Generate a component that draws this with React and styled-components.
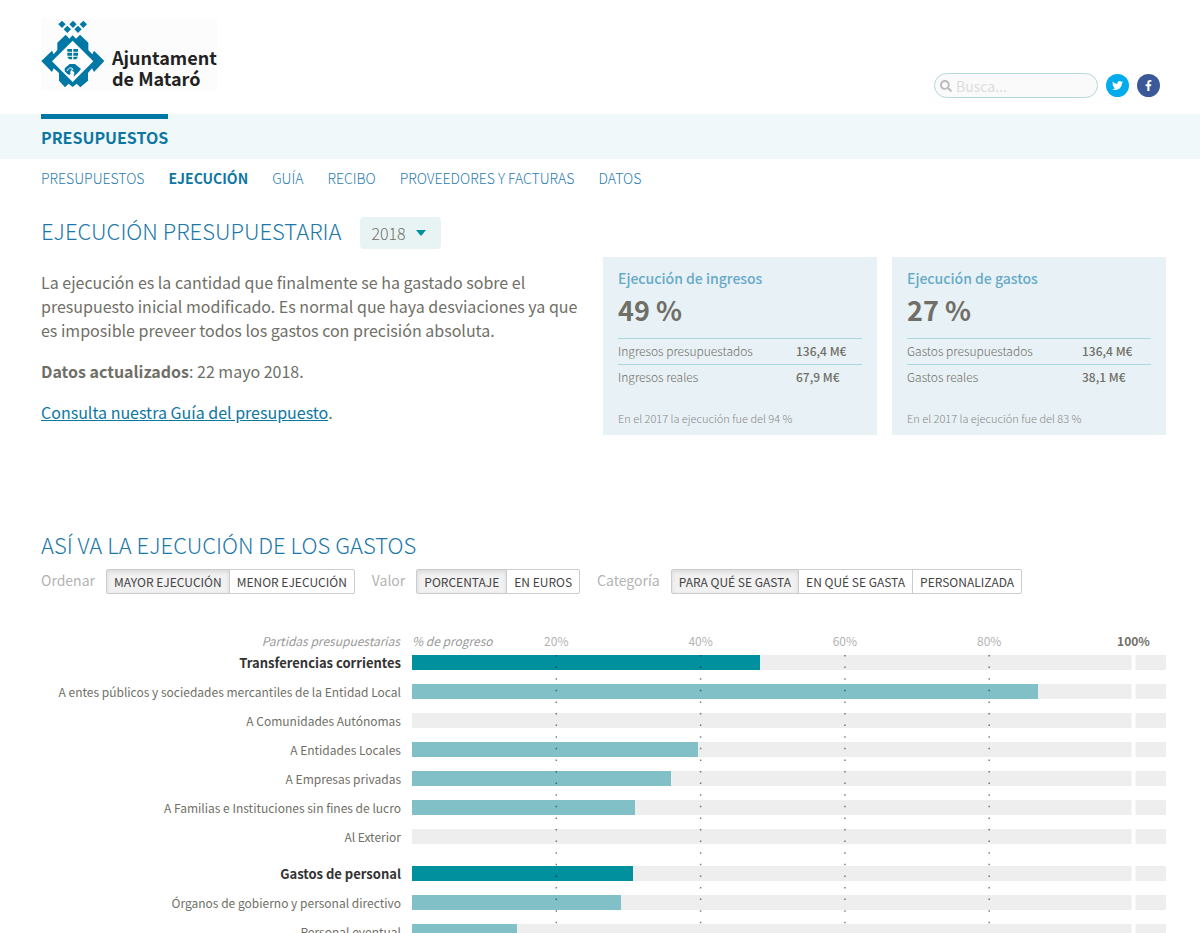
import React from "react";
import styled, { createGlobalStyle } from "styled-components";
import { FaFacebookF, FaSearch, FaTwitter } from "react-icons/fa";

const FULL_SCALE = 104.5;

const menu = [
  "Presupuestos",
  "Ejecución",
  "Guía",
  "Recibo",
  "Proveedores y facturas",
  "Datos",
];

const cards = [
  {
    title: "Ejecución de ingresos",
    percent: "49 %",
    rows: [
      ["Ingresos presupuestados", "136,4 M€"],
      ["Ingresos reales", "67,9 M€"],
    ],
    note: "En el 2017 la ejecución fue del 94 %",
    valueWidth: 66,
  },
  {
    title: "Ejecución de gastos",
    percent: "27 %",
    rows: [
      ["Gastos presupuestados", "136,4 M€"],
      ["Gastos reales", "38,1 M€"],
    ],
    note: "En el 2017 la ejecución fue del 83 %",
    valueWidth: 69,
  },
];

const filters = [
  { label: "Ordenar", options: ["Mayor ejecución", "Menor ejecución"] },
  { label: "Valor", options: ["Porcentaje", "En euros"] },
  {
    label: "Categoría",
    options: ["Para qué se gasta", "En qué se gasta", "Personalizada"],
  },
];

const groups = [
  [
    { name: "Transferencias corrientes", value: 48.3 },
    {
      name: "A entes públicos y sociedades mercantiles de la Entidad Local",
      value: 86.8,
    },
    { name: "A Comunidades Autónomas", value: 0 },
    { name: "A Entidades Locales", value: 39.6 },
    { name: "A Empresas privadas", value: 35.9 },
    { name: "A Familias e Instituciones sin fines de lucro", value: 30.9 },
    { name: "Al Exterior", value: 0 },
  ],
  [
    { name: "Gastos de personal", value: 30.6 },
    { name: "Órganos de gobierno y personal directivo", value: 29 },
    { name: "Personal eventual", value: 14.5 },
  ],
];

const toScale = (value) => `${(value / FULL_SCALE) * 100}%`;

const Emblem = () => (
  <svg width="64" height="70" viewBox="34 25 192 210" aria-hidden="true">
    <g fill="#0078a5">
      <path d="M97 30l11 11-11 11-11-11zM130 30l11 11-11 11-11-11zM161 30l11 11-11 11-11-11zM113 45l11 11-11 11-11-11zM145 45l11 11-11 11-11-11z" />
      <path d="M129 74l10 10 12-12 25 24v22l12 13 5-11 31 31-31 33-6-11-12 14v23l-23 20-11-11-12 10-12-10-11 11-18-20v-23l-16-14-5 11-32-33 32-31 5 11 11-13V96l25-24 11 12z" />
    </g>
    <path d="M129 90l62 62-62 62-62-62z" fill="#fff" />
    <g fill="#0078a5">
      <path d="M113 115h14v8h-14zM131 115h14v8h-14zM113 126h14v9h-14zM131 126h14v9h-14zM113 138h14v8h-9zM131 138h14l-5 8h-9z" />
      <path d="M105 173l15-13h16l18 15-7 9-15 14 2-13-8-6-5 13-7-1-9-9z" />
    </g>
    <path
      d="M112 181q7-14 17-7M124 187q-2-12 7-10"
      fill="none"
      stroke="#fff"
      strokeWidth="3"
    />
  </svg>
);

const GridLines = () => (
  <Overlay aria-hidden="true">
    {[20, 40, 60, 80].map((tick) => (
      <line
        key={tick}
        x1={toScale(tick)}
        x2={toScale(tick)}
        y1="0"
        y2="100%"
        stroke="#000"
        strokeOpacity="0.5"
        strokeWidth="1.5"
        strokeDasharray="1.5 10.1"
      />
    ))}
    <line
      x1={toScale(100)}
      x2={toScale(100)}
      y1="0"
      y2="100%"
      stroke="#fff"
      strokeWidth="4"
    />
  </Overlay>
);

const App = () => {
  return (
    <>
      <GlobalStyle />
      <Header>
        <Logo href="#">
          <Emblem />
          <LogoName>
            Ajuntament
            <br />
            de Mataró
          </LogoName>
        </Logo>
        <Tools>
          <SearchBox>
            <FaSearch />
            <input type="search" placeholder="Busca..." aria-label="Busca" />
          </SearchBox>
          <Social href="#" $color="#00aced" aria-label="Twitter">
            <FaTwitter />
          </Social>
          <Social href="#" $color="#3b5998" aria-label="Facebook">
            <FaFacebookF />
          </Social>
        </Tools>
      </Header>

      <Band>
        <Section href="#">Presupuestos</Section>
      </Band>
      <Menu>
        {menu.map((item) => (
          <MenuLink href="#" key={item} $active={item === "Ejecución"}>
            {item}
          </MenuLink>
        ))}
      </Menu>

      <Main>
        <TitleRow>
          <Title as="h1">Ejecución presupuestaria</Title>
          <YearPicker>
            <select aria-label="Año" defaultValue="2018">
              <option>2018</option>
              <option>2017</option>
            </select>
            <svg width="10" height="6" viewBox="0 0 10 6" aria-hidden="true">
              <path d="M0 0h10L6 5q-1 1-2 0z" fill="#00909e" />
            </svg>
          </YearPicker>
        </TitleRow>

        <Summary>
          <Intro>
            <p>
              La ejecución es la cantidad que finalmente se ha gastado sobre el
              presupuesto inicial modificado. Es normal que haya desviaciones ya
              que es imposible preveer todos los gastos con precisión absoluta.
            </p>
            <p>
              <strong>Datos actualizados</strong>: 22 mayo 2018.
            </p>
            <p>
              <a href="#">Consulta nuestra Guía del presupuesto</a>.
            </p>
          </Intro>
          {cards.map((card) => (
            <Card key={card.title}>
              <h3>{card.title}</h3>
              <Percent>{card.percent}</Percent>
              <Figures $valueWidth={card.valueWidth}>
                <tbody>
                  {card.rows.map(([name, amount]) => (
                    <tr key={name}>
                      <th scope="row">{name}</th>
                      <td>{amount}</td>
                    </tr>
                  ))}
                </tbody>
              </Figures>
              <Note>{card.note}</Note>
            </Card>
          ))}
        </Summary>

        <Title>Así va la ejecución de los gastos</Title>
        <Filters>
          {filters.map((filter) => (
            <Filter key={filter.label} role="group" aria-label={filter.label}>
              <span>{filter.label}</span>
              <ButtonGroup>
                {filter.options.map((option, i) => (
                  <Option key={option} type="button" $active={i === 0}>
                    {option}
                  </Option>
                ))}
              </ButtonGroup>
            </Filter>
          ))}
        </Filters>

        <ChartHead>
          <em>Partidas presupuestarias</em>
          <Axis>
            <em>% de progreso</em>
            {[20, 40, 60, 80, 100].map((tick) => (
              <Tick key={tick} style={{ left: toScale(tick) }} $full={tick === 100}>
                {tick}%
              </Tick>
            ))}
          </Axis>
        </ChartHead>
        <Chart>
          {groups.map((rows) => (
            <Group key={rows[0].name}>
              {rows.map((row, i) => (
                <Row key={row.name} $main={i === 0}>
                  <span>{row.name}</span>
                  <Track>
                    <Bar $main={i === 0} style={{ width: toScale(row.value) }} />
                  </Track>
                </Row>
              ))}
            </Group>
          ))}
          <GridLines />
        </Chart>
      </Main>
    </>
  );
};

export default App;

const GlobalStyle = createGlobalStyle`
  * {
    box-sizing: border-box;
  }
  body {
    margin: 0;
    background: #fff;
    color: #706f67;
    font-family: "Noto Sans CJK SC", "Open Sans", sans-serif;
    font-size: 16px;
    line-height: 24px;
  }
  h1, h2, h3, p, ul {
    margin: 0;
    padding: 0;
  }
  button, input, select {
    font: inherit;
    color: inherit;
  }
  a {
    color: #0d76a3;
  }
`;

const Header = styled.header`
  display: flex;
  justify-content: space-between;
  align-items: flex-end;
  padding: 19px 40px 16px 41px;
`;

const Logo = styled.a`
  display: flex;
  align-items: flex-start;
  gap: 7px;
  height: 72px;
  margin-bottom: 7px;
  background: #fcfcfc;
  text-decoration: none;
`;

const LogoName = styled.span`
  padding-top: 28px;
  color: #222;
  font-size: 18px;
  font-weight: 700;
  line-height: 21px;
`;

const Tools = styled.div`
  display: flex;
  align-items: center;
  gap: 8px;
`;

const SearchBox = styled.label`
  display: flex;
  align-items: center;
  gap: 4px;
  width: 164px;
  height: 25px;
  padding: 0 5px;
  border: 1px solid #b5d8dc;
  border-radius: 13px;
  background: #fafafa;

  svg {
    flex: none;
    width: 12px;
    height: 12px;
    color: #bbb;
  }
  input {
    min-width: 0;
    padding: 0;
    border: 0;
    outline: 0;
    background: none;
    font-size: 14px;
    line-height: 20px;
  }
  input::placeholder {
    color: #ddd;
  }
`;

const Social = styled.a`
  display: flex;
  align-items: center;
  justify-content: center;
  width: 23px;
  height: 23px;
  border-radius: 50%;
  background: ${(props) => props.$color};
  color: #fff;
  font-size: 11px;
`;

const Band = styled.div`
  padding: 0 41px;
  background: #f0f8fa;
`;

const Section = styled.a`
  display: block;
  width: fit-content;
  padding: 6px 0 10px;
  border-top: 5px solid #0078a5;
  color: #0d76a3;
  font-weight: 700;
  text-decoration: none;
  text-transform: uppercase;
`;

const Menu = styled.nav`
  display: flex;
  flex-wrap: wrap;
  gap: 24px;
  padding: 7px 41px 0;
`;

const MenuLink = styled.a`
  color: ${(props) => (props.$active ? "#0d76a3" : "#2a7cae")};
  font-size: 14px;
  font-weight: ${(props) => (props.$active ? 700 : 300)};
  text-decoration: none;
  text-transform: uppercase;
`;

const Main = styled.main`
  padding: 27px 34px 0 41px;
`;

const TitleRow = styled.div`
  display: flex;
  align-items: flex-start;
  gap: 19px;
`;

const Title = styled.h2`
  color: #1c78a8;
  font-size: 22px;
  font-weight: 300;
  line-height: 26px;
  text-transform: uppercase;
`;

const YearPicker = styled.div`
  display: flex;
  align-items: center;
  height: 32px;
  padding: 0 15px 0 11px;
  border-radius: 4px;
  background: #e8f4f4;

  select {
    width: 45px;
    padding: 0;
    border: 0;
    outline: 0;
    background: none;
    appearance: none;
    font-weight: 300;
  }
`;

const Summary = styled.div`
  display: grid;
  grid-template-columns: 547fr 274fr 274fr;
  gap: 15px;
  margin: 8px 0 96px;
`;

const Intro = styled.div`
  padding: 13px 4px 0 0;

  p + p {
    margin-top: 17px;
  }
`;

const Card = styled.section`
  padding: 10px 15px 5px;
  background: #e8f1f5;

  h3 {
    color: #66a9c9;
    font-size: 14px;
    font-weight: 500;
    line-height: 23px;
  }
`;

const Percent = styled.p`
  margin-bottom: 8px;
  font-size: 27px;
  font-weight: 700;
  line-height: 40px;
`;

const Figures = styled.table`
  width: 100%;
  border-collapse: collapse;
  font-size: 12px;
  line-height: 24px;

  th,
  td {
    padding: 0 0 1px;
    text-align: left;
  }
  tr {
    border-top: 1px solid #acd6de;
  }
  th {
    font-weight: 300;
  }
  td {
    width: ${(props) => props.$valueWidth}px;
    font-weight: 500;
  }
`;

const Note = styled.p`
  margin-top: 16px;
  color: #888;
  font-size: 11px;
  font-weight: 300;
`;

const Filters = styled.div`
  display: flex;
  flex-wrap: wrap;
  gap: 17px;
  margin-top: 12px;
`;

const Filter = styled.div`
  display: flex;
  gap: 11px;
  color: #b3b3b3;
  font-size: 14px;
  line-height: 22px;
`;

const ButtonGroup = styled.div`
  display: flex;
`;

const Option = styled.button`
  height: 25px;
  padding: 0 7px;
  border: 1px solid #ccc;
  background: ${(props) => (props.$active ? "#f1f1f1" : "#fff")};
  box-shadow: ${(props) =>
    props.$active ? "inset 0 2px 4px rgba(0, 0, 0, 0.1)" : "none"};
  color: #444;
  font-size: 12px;
  line-height: 23px;
  text-transform: uppercase;

  &:first-child {
    border-radius: 2px 0 0 2px;
  }
  &:last-child {
    border-radius: 0 2px 2px 0;
  }
  & + & {
    margin-left: -1px;
  }
`;

const ChartHead = styled.div`
  display: grid;
  grid-template-columns: 359px minmax(0, 1fr);
  gap: 12px;
  margin-top: 37px;
  color: #999;
  font-size: 12px;
  line-height: 20px;

  > em {
    text-align: right;
  }
`;

const Axis = styled.div`
  position: relative;
`;

const Tick = styled.span`
  position: absolute;
  transform: translateX(-50%);
  color: ${(props) => (props.$full ? "#706f67" : "#b3b3b3")};
  font-weight: ${(props) => (props.$full ? 700 : 400)};
`;

const Chart = styled.div`
  position: relative;
  padding-top: 4px;
`;

const Overlay = styled.svg`
  position: absolute;
  top: 4px;
  left: 371px;
  width: calc(100% - 371px);
  height: calc(100% - 4px);
`;

const Group = styled.ul`
  list-style: none;

  & + & {
    margin-top: 8px;
  }
`;

const Row = styled.li`
  display: grid;
  grid-template-columns: 360px minmax(0, 1fr);
  gap: 11px;
  height: 29px;
  color: ${(props) => (props.$main ? "#333" : "#706f67")};
  font-size: ${(props) => (props.$main ? 13 : 12)}px;
  font-weight: ${(props) => (props.$main ? 700 : 400)};
  line-height: 15px;
  text-align: right;
`;

const Track = styled.div`
  height: 15px;
  background: #eee;
`;

const Bar = styled.div`
  height: 100%;
  background: ${(props) => (props.$main ? "#00909e" : "#82c0c8")};
`;
